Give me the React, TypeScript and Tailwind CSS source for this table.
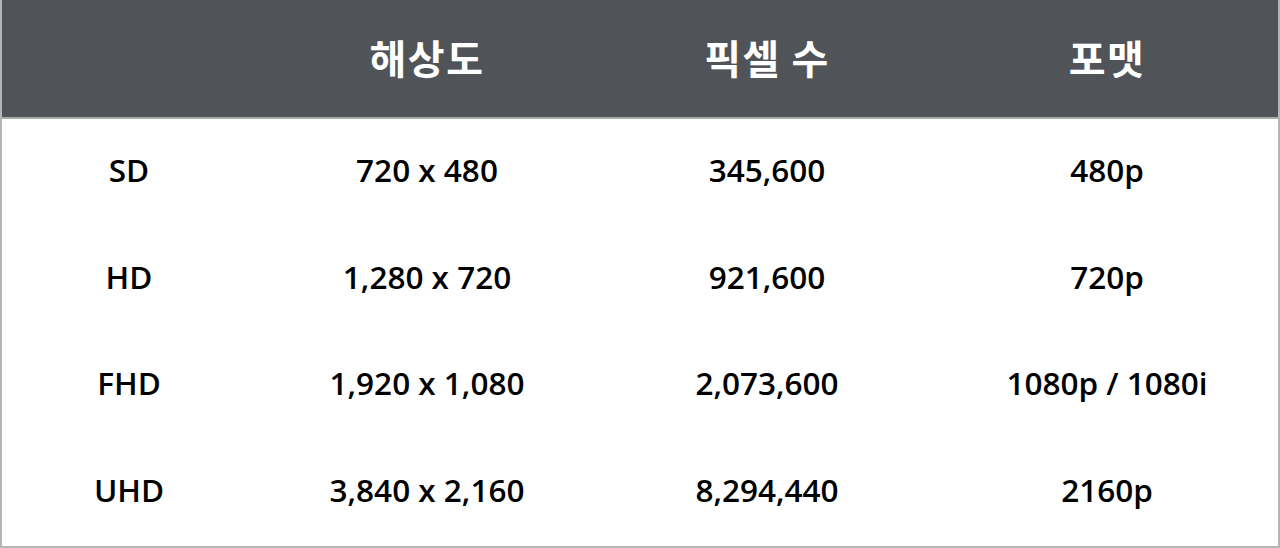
import React from "react";

const rows = [
  ["SD", "720 x 480", "345,600", "480p"],
  ["HD", "1,280 x 720", "921,600", "720p"],
  ["FHD", "1,920 x 1,080", "2,073,600", "1080p / 1080i"],
  ["UHD", "3,840 x 2,160", "8,294,440", "2160p"],
];

export default function App() {
  return (
    <div
      className="w-[1280px] h-[548px] bg-white"
      style={{ fontFamily: '"Open Sans", "Noto Sans CJK KR", sans-serif' }}
    >
      <div className="w-full h-full border-x-2 border-b-2 border-[#b5b5b5] flex flex-col">
        <div className="grid grid-cols-[254px_342px_338px_1fr] h-[119px] bg-[#505357] border-b-2 border-[#a9aaac] items-center text-white font-bold text-[40px] tracking-[1.5px] pb-[4px]"
          style={{ fontFamily: '"Noto Sans CJK KR", sans-serif' }}>
          <div></div>
          <div className="text-center">해상도</div>
          <div className="text-center">픽셀 수</div>
          <div className="text-center">포맷</div>
        </div>
        {rows.map((r) => (
          <div
            key={r[0]}
            className="grid grid-cols-[254px_342px_338px_1fr] flex-1 items-center text-black font-semibold text-[31.5px] pb-[6px]"
          >
            {r.map((c, i) => (
              <div key={i} className="text-center">
                {c}
              </div>
            ))}
          </div>
        ))}
      </div>
    </div>
  );
}
